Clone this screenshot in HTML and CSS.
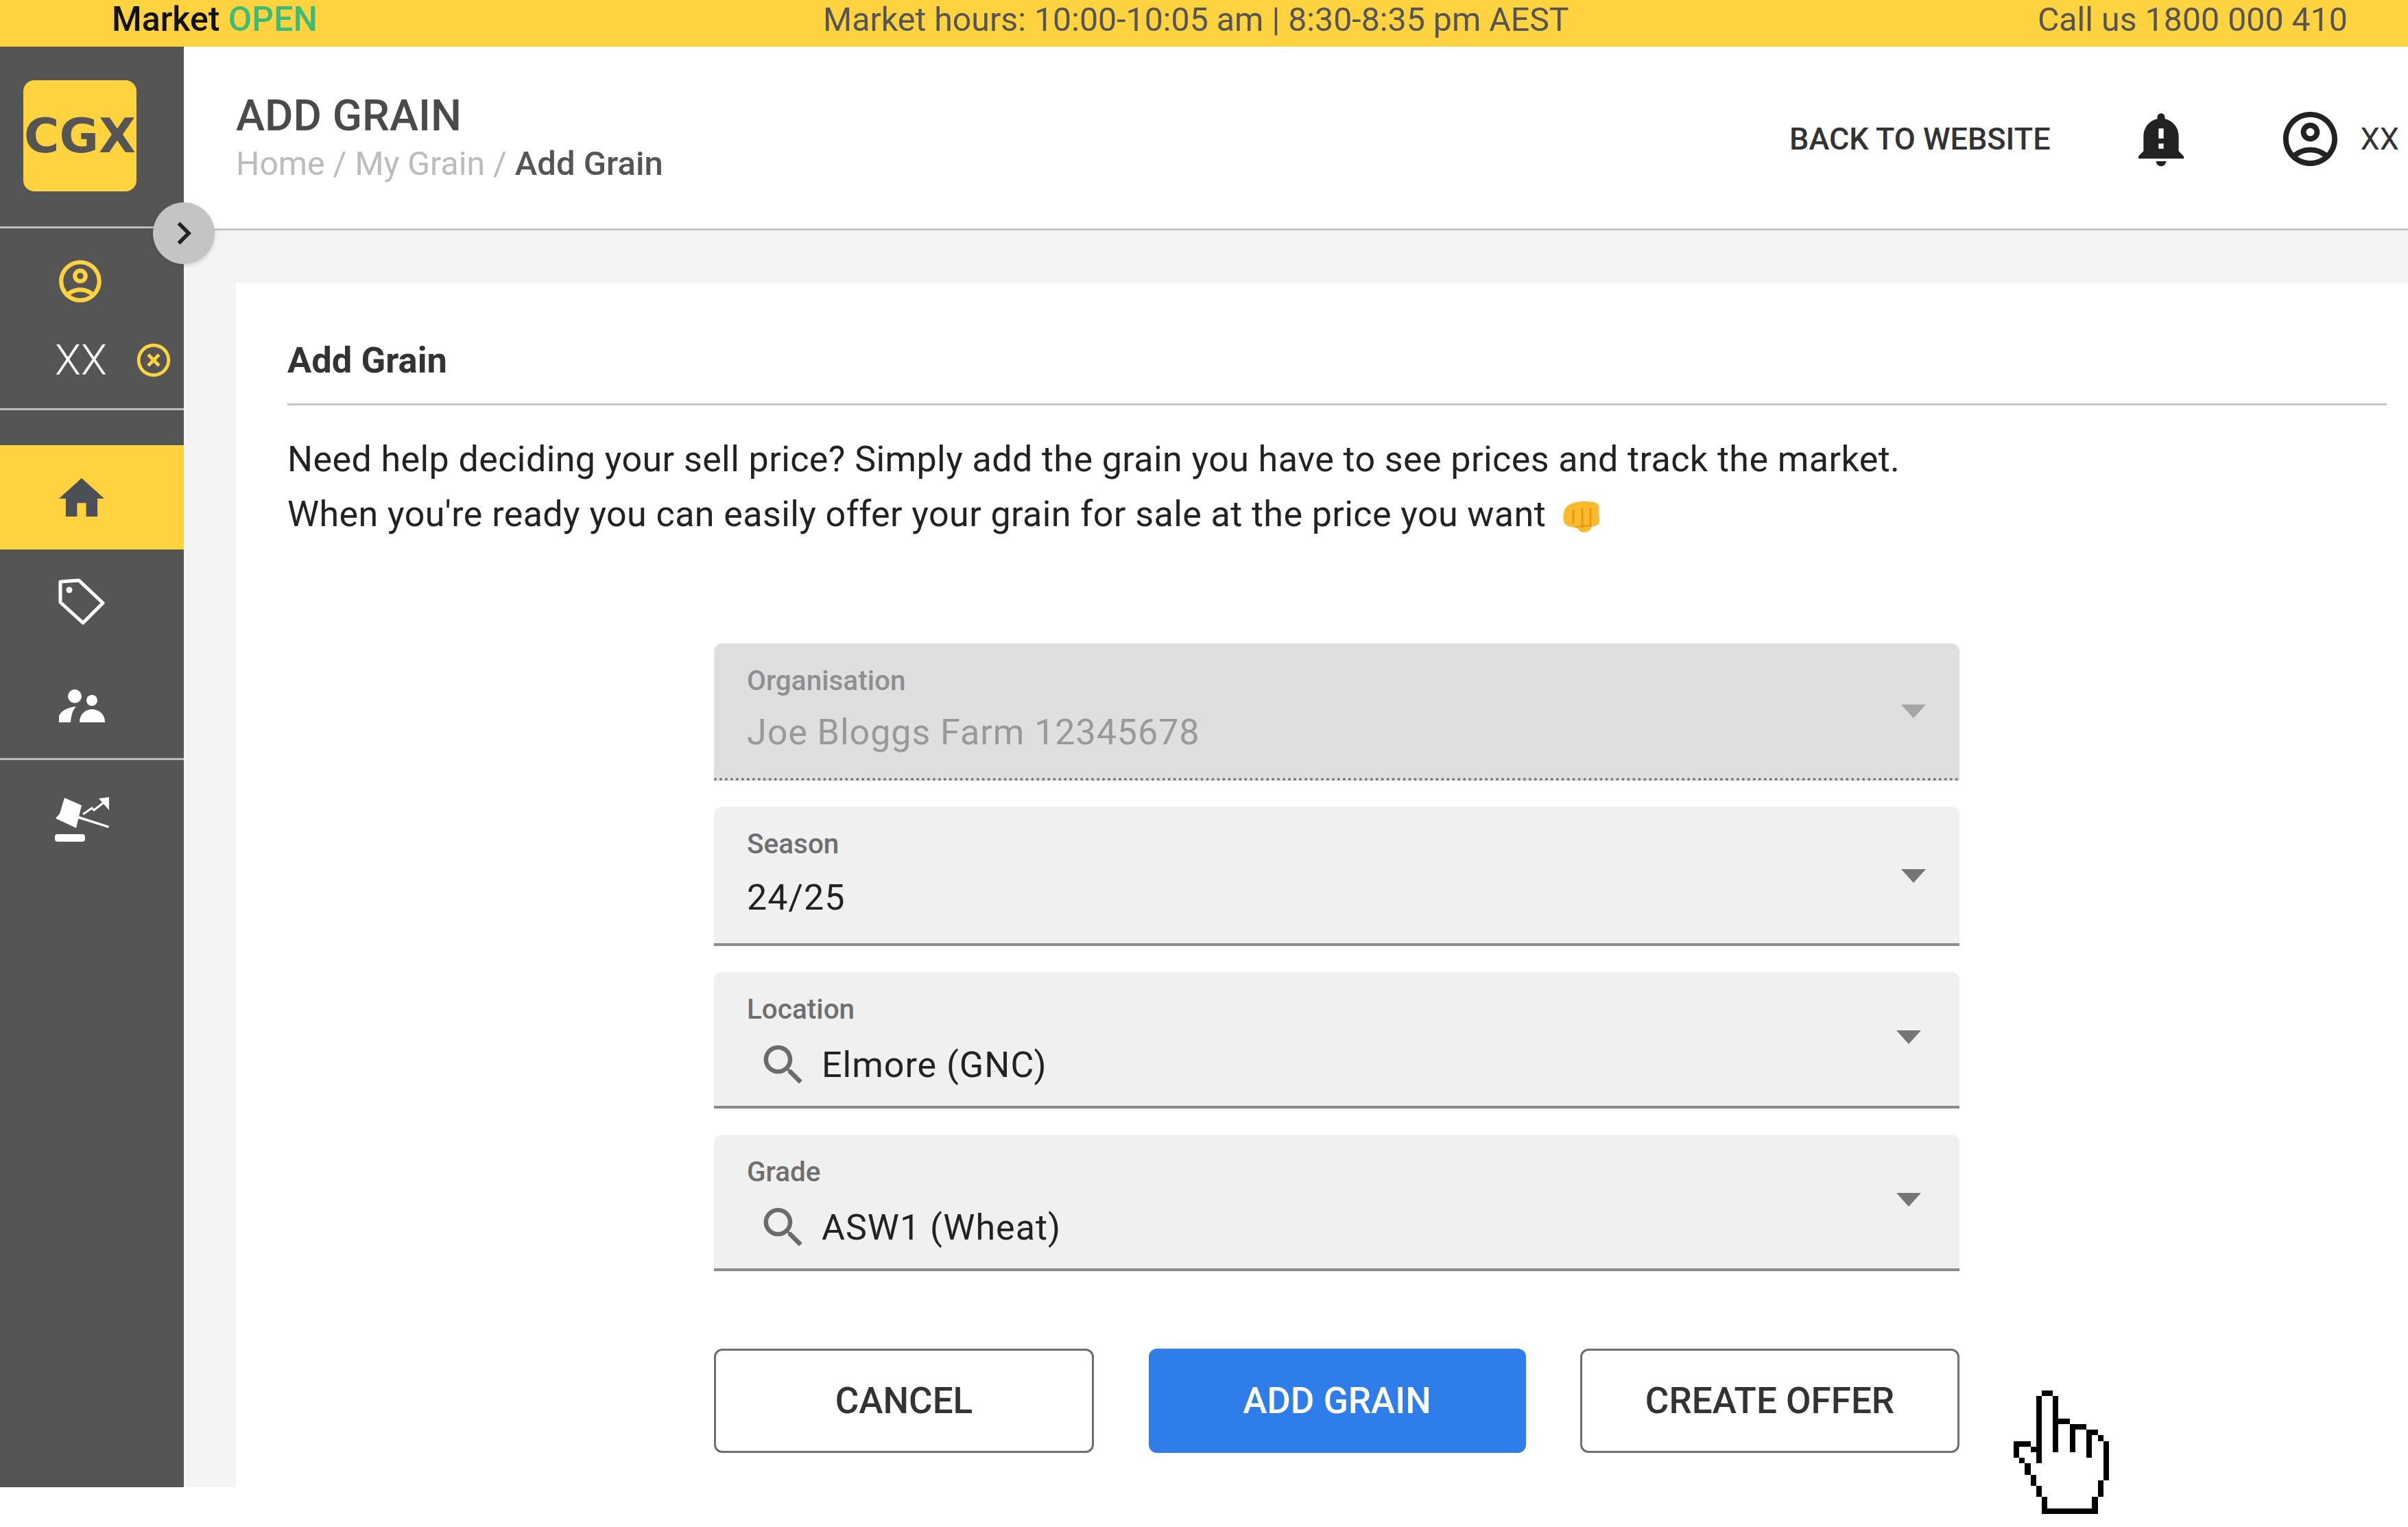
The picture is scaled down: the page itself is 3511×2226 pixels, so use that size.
FILE: index.html
```html
<!DOCTYPE html>
<html lang="en">
<head>
<meta charset="utf-8">
<title>Add Grain</title>
<link rel="stylesheet" href="styles.css">
</head>
<body>
<div class="topbar">
  <div class="topbar-left"><span class="market">Market</span> <span class="open">OPEN</span></div>
  <div class="topbar-mid">Market hours: 10:00-10:05 am | 8:30-8:35 pm AEST</div>
  <div class="topbar-right">Call us 1800 000 410</div>
</div>
<div class="shell">
  <aside class="sidebar">
    <div class="side-logo"><div class="logo">CGX</div></div>
    <div class="side-user">
      <svg class="side-user-icon" viewBox="0 0 24 24"><path d="M12 2C6.48 2 2 6.48 2 12s4.48 10 10 10 10-4.48 10-10S17.52 2 12 2zM7.35 18.5C8.66 17.56 10.26 17 12 17s3.34.56 4.65 1.5C15.34 19.44 13.74 20 12 20s-3.34-.56-4.65-1.5zm10.79-1.38C16.45 15.8 14.32 15 12 15s-4.45.8-6.14 2.12C4.7 15.73 4 13.95 4 12c0-4.42 3.58-8 8-8s8 3.58 8 8c0 1.95-.7 3.73-1.86 5.12zM12 6c-1.93 0-3.5 1.57-3.5 3.5S10.07 13 12 13s3.5-1.57 3.5-3.5S13.93 6 12 6zm0 5c-.83 0-1.5-.67-1.5-1.5S11.17 8 12 8s1.5.67 1.5 1.5S12.83 11 12 11z"/></svg>
      <div class="side-user-row">
        <span class="side-user-name">XX</span>
        <svg class="side-close" viewBox="0 0 24 24"><path d="M14.59 8L12 10.59 9.41 8 8 9.41 10.59 12 8 14.59 9.41 16 12 13.41 14.59 16 16 14.59 13.41 12 16 9.41 14.59 8zM12 2C6.47 2 2 6.47 2 12s4.47 10 10 10 10-4.47 10-10S17.53 2 12 2zm0 18c-4.41 0-8-3.59-8-8s3.59-8 8-8 8 3.59 8 8-3.59 8-8 8z"/></svg>
      </div>
    </div>
    <nav class="side-nav">
      <div class="nav-item nav-active">
        <svg class="nav-home" viewBox="2 3 20 17"><path d="M10 20v-6h4v6h5v-8h3L12 3 2 12h3v8z"/></svg>
      </div>
      <div class="nav-item">
        <svg class="nav-tag" viewBox="0 0 68 68"><path d="M3 5 L30 3 L65 36 L36 65 L3 35 Z" fill="none" stroke="#fff" stroke-width="5" stroke-linejoin="round"/><circle cx="16" cy="17" r="4.5" fill="#fff"/></svg>
      </div>
      <div class="nav-item">
        <svg class="nav-people" viewBox="0 0 67 48"><circle cx="23" cy="10" r="10"/><circle cx="48" cy="16" r="8"/><path d="M0 48V39C2 32 12 26 25 25C20 30 18 37 17 48Z"/><path d="M30 48C30 35 40 29 48 29C57 29 67 35 67 48Z"/></svg>
      </div>
      <div class="nav-item nav-last">
        <svg class="nav-gavel" viewBox="0 0 79 65"><path d="M14 1L39 12L31 45L1 31L7 24Z" fill="#fff"/><path d="M33 27L79 42L78 45L33 31Z" fill="#fff"/><path d="M41 25L54 16L57 19L71 8" stroke="#fff" stroke-width="3" fill="none"/><path d="M64 2L79 0V19Z" fill="#fff"/><rect x="0" y="54" width="44" height="11" rx="4" fill="#fff"/></svg>
      </div>
    </nav>
  </aside>
  <button class="toggle" type="button" aria-label="Expand"><svg viewBox="0 0 24 24"><path d="M10 6L8.59 7.41 13.17 12l-4.58 4.59L10 18l6-6z"/></svg></button>
  <div class="main">
    <header class="header">
      <div class="header-titles">
        <h1 class="page-title">ADD GRAIN</h1>
        <div class="crumbs"><span class="crumb-muted">Home / My Grain / </span><span class="crumb-current">Add Grain</span></div>
      </div>
      <div class="header-actions">
        <span class="back-link">BACK TO WEBSITE</span>
        <svg class="bell" viewBox="0 0 24 24"><path d="M12 23c1.1 0 1.99-.89 1.99-1.99h-3.98C10.01 22.11 10.9 23 12 23zm7-6v-6c0-3.35-2.36-6.15-5.5-6.83V3.5c0-.83-.67-1.5-1.5-1.5s-1.5.67-1.5 1.5v.67C7.36 4.85 5 7.65 5 11v6l-2 2v1h18v-1l-2-2zm-6-1h-2v-2h2v2zm0-4h-2V8h2v4z"/></svg>
        <svg class="head-user" viewBox="0 0 24 24"><path d="M12 2C6.48 2 2 6.48 2 12s4.48 10 10 10 10-4.48 10-10S17.52 2 12 2zM7.35 18.5C8.66 17.56 10.26 17 12 17s3.34.56 4.65 1.5C15.34 19.44 13.74 20 12 20s-3.34-.56-4.65-1.5zm10.79-1.38C16.45 15.8 14.32 15 12 15s-4.45.8-6.14 2.12C4.7 15.73 4 13.95 4 12c0-4.42 3.58-8 8-8s8 3.58 8 8c0 1.95-.7 3.73-1.86 5.12zM12 6c-1.93 0-3.5 1.57-3.5 3.5S10.07 13 12 13s3.5-1.57 3.5-3.5S13.93 6 12 6zm0 5c-.83 0-1.5-.67-1.5-1.5S11.17 8 12 8s1.5.67 1.5 1.5S12.83 11 12 11z"/></svg>
        <span class="head-name">XX</span>
      </div>
    </header>
    <section class="card">
      <h2 class="card-title">Add Grain</h2>
      <p class="intro">Need help deciding your sell price? Simply add the grain you have to see prices and track the market.<br>When you're ready you can easily offer your grain for sale at the price you want <svg class="fist" viewBox="0 0 53 46"><path d="M6 8C12 3 24 0 34 1C44 1 52 3 52 8L53 30C52 35 48 38 42 37C41 43 36 46 30 46C24 46 22 41 20 39C13 39 6 37 2 33C-1 25 0 14 6 8Z" fill="#fdb92c"/><path d="M15 13V34M28 11V40M40 11V36" stroke="#e59a16" stroke-width="3" fill="none"/><path d="M18 39C24 36 36 36 42 37" stroke="#e59a16" stroke-width="2" fill="none"/></svg></p>
      <form class="form">
        <div class="field field-disabled field-org">
          <div class="field-body">
            <div class="field-label">Organisation</div>
            <div class="field-value">Joe Bloggs Farm 12345678</div>
          </div>
          <span class="arrow"></span>
        </div>
        <div class="field field-season">
          <div class="field-body">
            <div class="field-label">Season</div>
            <div class="field-value">24/25</div>
          </div>
          <span class="arrow"></span>
        </div>
        <div class="field field-search">
          <div class="field-body">
            <div class="field-label">Location</div>
            <div class="field-search-row">
              <svg class="search" viewBox="0 0 24 24"><path d="M15.5 14h-.79l-.28-.27C15.41 12.59 16 11.11 16 9.5 16 5.91 13.09 3 9.5 3S3 5.91 3 9.5 5.91 16 9.5 16c1.61 0 3.09-.59 4.23-1.57l.27.28v.79l5 4.99L20.49 19l-4.99-5zm-6 0C7.01 14 5 11.99 5 9.5S7.01 5 9.5 5 14 7.01 14 9.5 11.99 14 9.5 14z"/></svg>
              <div class="field-value">Elmore (GNC)</div>
            </div>
          </div>
          <span class="arrow"></span>
        </div>
        <div class="field field-search">
          <div class="field-body">
            <div class="field-label">Grade</div>
            <div class="field-search-row">
              <svg class="search" viewBox="0 0 24 24"><path d="M15.5 14h-.79l-.28-.27C15.41 12.59 16 11.11 16 9.5 16 5.91 13.09 3 9.5 3S3 5.91 3 9.5 5.91 16 9.5 16c1.61 0 3.09-.59 4.23-1.57l.27.28v.79l5 4.99L20.49 19l-4.99-5zm-6 0C7.01 14 5 11.99 5 9.5S7.01 5 9.5 5 14 7.01 14 9.5 11.99 14 9.5 14z"/></svg>
              <div class="field-value">ASW1 (Wheat)</div>
            </div>
          </div>
          <span class="arrow"></span>
        </div>
        <div class="actions">
          <button class="btn btn-cancel" type="button">CANCEL</button>
          <button class="btn btn-primary" type="button">ADD GRAIN</button>
          <button class="btn btn-create" type="button">CREATE OFFER</button>
        </div>
      </form>
    </section>
  </div>
</div>
<svg class="cursor" viewBox="0 0 17 22" preserveAspectRatio="none" shape-rendering="crispEdges">
  <path fill="#fff" d="M5 0h2v5h3v1h3v1h2v1h1v1h1v7h-1v3h-1v3H5v-3H4v-2H3v-2H2v-2H1v-2H0V9h3v1h1V1h1z"/>
  <path fill="#000" d="M5 0h2v1H5zM4 1h1v12H4zM7 1h1v10H7zM8 5h2v1H8zM10 6h3v1h-3zM10 7h1v4h-1zM13 7h2v1h-2zM13 8h1v4h-1zM15 8h1v1h-1zM16 9h1v7h-1zM15 16h1v3h-1zM14 19h1v3h-1zM5 21h9v1H5zM5 19h1v2H5zM4 17h1v2H4zM3 15h1v2H3zM2 13h1v2H2zM1 12h1v1H1zM0 10h1v2H0zM0 9h3v1H0zM3 10h1v1H3z"/>
</svg>
</body>
</html>
```
FILE: styles.css
```css
* { box-sizing: border-box; }
html, body { margin: 0; padding: 0; background: #fff; }
body { font-family: Roboto, "Liberation Sans", sans-serif; color: #333; width: 3511px; height: 2226px; overflow: hidden; position: relative; }

.topbar { height: 68px; background: #ffd33f; display: flex; padding: 0 88px 0 163px; font-size: 48.3px; line-height: 57px; color: #555; }
.topbar-left { width: 1037px; font-size: 50px; }
.market { font-weight: 500; color: #111; }
.open { color: #3dbb78; font-weight: 500; }
.topbar-right { margin-left: auto; }

.shell { display: flex; height: 2100px; position: relative; }

.sidebar { width: 268px; flex: none; background: #555; display: flex; flex-direction: column; }
.side-logo { height: 265px; padding: 49px 0 0 34px; border-bottom: 3px solid #bdbdbd; }
.logo { width: 165px; height: 162px; border-radius: 16px; background: #ffd33f; color: #555; font-family: "DejaVu Sans", sans-serif; font-weight: 700; font-size: 70px; line-height: 162px; text-align: center; white-space: nowrap; }
.side-user { height: 265px; border-bottom: 3px solid #bdbdbd; display: flex; flex-direction: column; align-items: center; padding-top: 40px; }
.side-user-icon { width: 74px; height: 74px; fill: #ffd33f; margin-left: -34px; }
.side-user-row { display: flex; align-items: center; margin-top: 43px; width: 100%; padding-left: 80px; }
.side-user-name { font-size: 62px; line-height: 70px; font-weight: 300; color: #fff; }
.side-close { width: 58px; height: 58px; fill: #ffd33f; margin-left: 39px; }
.side-nav { margin-top: 51px; }
.nav-item { height: 152px; display: flex; align-items: center; justify-content: center; padding-right: 30px; }
.nav-active { background: #ffd33f; }
.nav-last { border-top: 3px solid #bdbdbd; height: 176px; }
.nav-home { width: 66px; height: 56px; fill: #4c4f56; }
.nav-tag { width: 68px; height: 68px; }
.nav-people { width: 67px; height: 48px; fill: #fff; }
.nav-gavel { width: 79px; height: 65px; }

.toggle { position: absolute; left: 223px; top: 227px; width: 90px; height: 90px; border: 0; padding: 0; border-radius: 50%; background: #c4c4c4; display: flex; align-items: center; justify-content: center; box-shadow: 0 2px 6px rgba(0,0,0,.15); }
.toggle svg { width: 66px; height: 66px; fill: #222; }

.main { flex: 1; min-width: 0; background: #f4f4f4; display: flex; flex-direction: column; padding-left: 0; }
.header { height: 268px; flex: none; background: #fff; border-bottom: 3px solid #c4c4c4; display: flex; justify-content: space-between; align-items: flex-start; padding: 0 13px 0 76px; }
.page-title { margin: 66px 0 0; font-size: 63.5px; line-height: 70px; font-weight: 500; color: #4a4a4a; }
.crumbs { font-size: 49px; line-height: 60px; margin-top: 5px; }
.crumb-muted { color: #bcbcbc; font-size: 48.2px; }
.crumb-current { color: #555; font-weight: 500; }
.header-actions { display: flex; align-items: center; height: 268px; margin-top: 0; }
.back-link { font-size: 45px; font-weight: 500; color: #333; }
.bell { width: 88px; height: 88px; fill: #222; margin-left: 117px; }
.head-user { width: 95px; height: 95px; fill: #222; margin-left: 126px; }
.head-name { font-size: 45px; color: #333; margin-left: 26px; }

.card { flex: 1; margin: 76px 0 0 76px; background: #fff; padding: 83px 31px 0 75px; }
.card-title { margin: 0; font-size: 52.5px; line-height: 60px; font-weight: 700; color: #333; padding-bottom: 33px; border-bottom: 3px solid #c4c4c4; }
.intro { margin: 39px 0 0; font-size: 52px; line-height: 80px; color: #222; letter-spacing: .41px; }
.fist { width: 53px; height: 46px; vertical-align: -9px; margin-left: 12px; }

.form { width: 1816px; margin: 148px 0 0 622px; display: flex; flex-direction: column; gap: 38px; }
.field { height: 199px; background: #f0f0f0; border-radius: 12px 12px 0 0; border-bottom: 4px solid #8a8a8a; display: flex; align-items: center; padding: 0 56px 0 48px; }
.field-org { height: 200px; }
.field-season { height: 203px; }
.field-body { flex: 1; align-self: flex-start; padding-top: 30px; }
.field-label { font-size: 40.5px; line-height: 48px; font-weight: 500; color: #6f6f6f; }
.field-value { font-size: 52px; line-height: 60px; color: #222; margin-top: 22px; letter-spacing: 1px; }
.field-season .field-value { margin-top: 25px; }
.field-disabled { background: #dfdfdf; border-bottom: 4px dotted #777; }
.field-disabled .field-label { color: #8f8f8f; }
.field-disabled .field-value { color: #999; letter-spacing: .95px; }
.field-disabled .arrow, .field-season .arrow { margin-right: -7px; }
.field-disabled .arrow { border-top-color: #a6a6a6; }
.field-search .arrow { margin-top: -6px; }
.field-search-row { display: flex; align-items: center; margin-top: 19px; margin-left: 15px; }
.field-search-row .field-value { margin-top: 0; margin-left: 17px; }
.search { width: 77px; height: 77px; fill: #6b6b6b; }
.arrow { width: 0; height: 0; flex: none; margin-top: 2px; border-left: 18px solid transparent; border-right: 18px solid transparent; border-top: 20px solid #757575; }

.actions { display: flex; justify-content: space-between; margin-top: 75px; }
.btn { height: 152px; border-radius: 12px; font-family: inherit; font-size: 53px; font-weight: 500; padding: 0; }
.btn-cancel { width: 554px; background: #fff; border: 3px solid #6f6f6f; color: #333; }
.btn-primary { width: 550px; background: #2f7de9; border: 0; color: #fff; }
.btn-create { width: 553px; background: #fff; border: 3px solid #6f6f6f; color: #333; }

.cursor { position: absolute; left: 2936px; top: 2027px; width: 139px; height: 180px; }
```
